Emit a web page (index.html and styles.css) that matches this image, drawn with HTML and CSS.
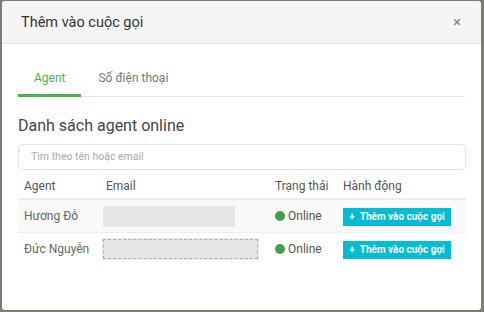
FILE: index.html
```html
<!DOCTYPE html>
<html>
<head>
<meta charset="utf-8">
<link rel="stylesheet" href="styles.css">
</head>
<body>
<div class="modal">
  <div class="modal-header">
    <span class="modal-title">Thêm vào cuộc gọi</span>
    <span class="close">×</span>
  </div>
  <div class="modal-body">
    <div class="tabs">
      <div class="tab active">Agent</div>
      <div class="tab">Số điện thoại</div>
    </div>
    <h3 class="heading">Danh sách agent online</h3>
    <div class="search">Tìm theo tên hoặc email</div>
    <table class="agents">
      <colgroup>
        <col class="c1"><col class="c2"><col class="c3"><col class="c4">
      </colgroup>
      <thead>
        <tr><th>Agent</th><th>Email</th><th>Trạng thái</th><th>Hành động</th></tr>
      </thead>
      <tbody>
        <tr class="odd">
          <td>Hương Đỗ</td>
          <td><div class="email-box"></div></td>
          <td><span class="status"><span class="dot"></span>Online</span></td>
          <td><span class="btn">+&nbsp;&nbsp;Thêm vào cuộc gọi</span></td>
        </tr>
        <tr>
          <td>Đức Nguyễn</td>
          <td><div class="email-box selected"></div></td>
          <td><span class="status"><span class="dot"></span>Online</span></td>
          <td><span class="btn">+&nbsp;&nbsp;Thêm vào cuộc gọi</span></td>
        </tr>
      </tbody>
    </table>
  </div>
</div>
</body>
</html>
```
FILE: styles.css
```css
html, body { margin: 0; padding: 0; }
body {
  width: 484px;
  height: 312px;
  background: #7c7c75;
  font-family: Roboto, "Liberation Sans", Arial, sans-serif;
  overflow: hidden;
  padding: 1px 3px 2px 2px;
  box-sizing: border-box;
}
.modal {
  background: #fff;
  border-radius: 3px;
  height: 309px;
  overflow: hidden;
}
.modal-header {
  height: 42px;
  background: #f5f5f5;
  border-bottom: 1px solid #e6e6e6;
  display: flex;
  align-items: center;
  justify-content: space-between;
  padding: 0 20px 0 19px;
}
.modal-title {
  font-size: 14.5px;
  color: #333;
  padding-top: 1px;
}
.close {
  font-size: 15px;
  color: #888;
  line-height: 1;
}
.modal-body {
  padding: 17px 16px 0 16px;
}
.tabs {
  display: flex;
  border-bottom: 1px solid #e6e6e6;
}
.tab {
  font-size: 12px;
  color: #777;
  padding: 10px 16px 9px;
  line-height: 14px;
  border-bottom: 3px solid transparent;
  margin-bottom: -1px;
}
.tab.active {
  color: #4caf50;
  border-bottom-color: #4caf50;
  margin-right: 1px;
}
.heading {
  margin: 19px 0 0;
  font-size: 16px;
  font-weight: normal;
  color: #444;
  line-height: 20px;
}
.search {
  margin-top: 8px;
  height: 24px;
  border: 1px solid #e3e3e3;
  border-radius: 4px;
  font-size: 10.5px;
  color: #aaa;
  line-height: 24px;
  padding-left: 12px;
  width: 434px;
}
.agents {
  border-collapse: collapse;
  width: 448px;
  margin-top: 3px;
  table-layout: fixed;
  font-size: 12px;
}
.c1 { width: 82px; }
.c2 { width: 169px; }
.c3 { width: 68px; }
.c4 { width: auto; }
.agents th {
  text-align: left;
  font-weight: normal;
  color: #555;
  height: 25px;
  padding: 0 6px;
  border-bottom: 2px solid #ececec;
}
.agents td {
  color: #666;
  height: 32px;
  padding: 0 6px;
  border-bottom: 1px solid #ececec;
}
.agents tbody tr:last-child td { border-bottom: none; }
.agents tr.odd td { background: #f9f9f9; }
.agents td:nth-child(2) { padding-left: 3px; }
.email-box {
  width: 132px;
  height: 21px;
  background: #e6e6e6;
}
.email-box.selected {
  width: 153px;
  height: 18px;
  border: 1px dashed #8fb9e0;
  outline: 1px solid #eaeaea;
}
.status {
  display: inline-flex;
  align-items: center;
  color: #555;
}
.dot {
  width: 10px;
  height: 10px;
  border-radius: 50%;
  background: #43a047;
  margin-right: 3px;
}
.btn {
  display: inline-block;
  background: #00bcd4;
  color: #fff;
  font-size: 10px;
  font-weight: bold;
  height: 18px;
  line-height: 18px;
  width: 108px;
  text-align: center;
  margin-top: 1px;
}
```
